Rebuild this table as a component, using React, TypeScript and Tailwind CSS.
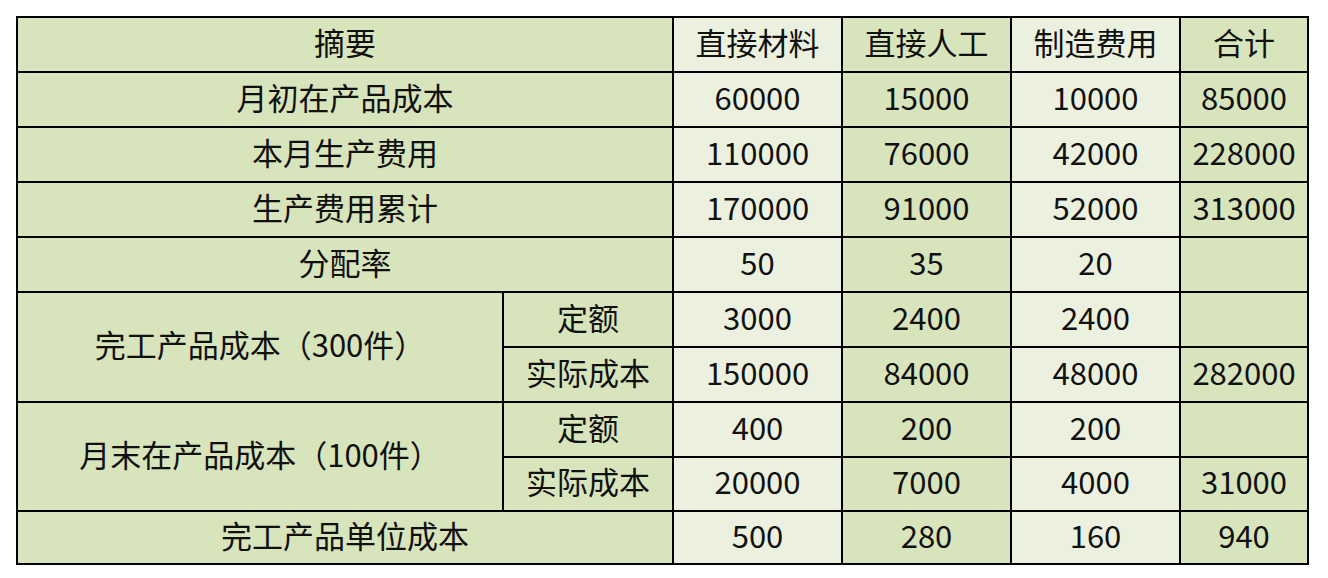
import React from 'react';

const DARK = 'bg-[#d8e4bc]';
const LIGHT = 'bg-[#ebf1de]';

type Row = { label?: string; sub?: string; vals: string[]; h: string };

// values: 直接材料, 直接人工, 制造费用, 合计
const cols = [LIGHT, DARK, LIGHT, DARK];

const cell = 'border-2 border-black text-center align-middle p-0 pb-[7px] leading-none';

export default function App() {
    const simple: Row[] = [
        { label: '月初在产品成本', vals: ['60000', '15000', '10000', '85000'], h: 'h-[55px]' },
        { label: '本月生产费用', vals: ['110000', '76000', '42000', '228000'], h: 'h-[55px]' },
        { label: '生产费用累计', vals: ['170000', '91000', '52000', '313000'], h: 'h-[55px]' },
        { label: '分配率', vals: ['50', '35', '20', ''], h: 'h-[55px]' },
    ];

    const groups = [
        {
            label: '完工产品成本（300件）',
            rows: [
                { sub: '定额', vals: ['3000', '2400', '2400', ''], h: 'h-[55px]' },
                { sub: '实际成本', vals: ['150000', '84000', '48000', '282000'], h: 'h-[55px]' },
            ],
        },
        {
            label: '月末在产品成本（100件）',
            rows: [
                { sub: '定额', vals: ['400', '200', '200', ''], h: 'h-[55px]' },
                { sub: '实际成本', vals: ['20000', '7000', '4000', '31000'], h: 'h-[54px]' },
            ],
        },
    ];

    const vals = (v: string[]) =>
        v.map((x, i) => (
            <td key={i} className={`${cell} ${cols[i]}`}>{x}</td>
        ));

    return (
        <div className="w-[1328px] h-[578px] bg-white pt-[16px] pl-[16px]">
            <table
                className="border-collapse table-fixed w-[1291px] text-[31px] text-[#111]"
                style={{ fontFamily: '"Noto Sans CJK SC", "Noto Sans", sans-serif' }}
            >
                <colgroup>
                    <col className="w-[486px]" />
                    <col className="w-[170px]" />
                    <col className="w-[169px]" />
                    <col className="w-[169px]" />
                    <col className="w-[169px]" />
                    <col className="w-[128px]" />
                </colgroup>
                <tbody>
                    <tr className="h-[55px]">
                        <td colSpan={2} className={`${cell} ${DARK}`}>摘要</td>
                        <td className={`${cell} ${LIGHT}`}>直接材料</td>
                        <td className={`${cell} ${DARK}`}>直接人工</td>
                        <td className={`${cell} ${LIGHT}`}>制造费用</td>
                        <td className={`${cell} ${DARK}`}>合计</td>
                    </tr>
                    {simple.map((r) => (
                        <tr key={r.label} className={r.h}>
                            <td colSpan={2} className={`${cell} ${DARK}`}>{r.label}</td>
                            {vals(r.vals)}
                        </tr>
                    ))}
                    {groups.map((g) =>
                        g.rows.map((r, i) => (
                            <tr key={g.label + i} className={r.h}>
                                {i === 0 && (
                                    <td rowSpan={2} className={`${cell} ${DARK}`}>{g.label}</td>
                                )}
                                <td className={`${cell} ${DARK}`}>{r.sub}</td>
                                {vals(r.vals)}
                            </tr>
                        ))
                    )}
                    <tr className="h-[53px]">
                        <td colSpan={2} className={`${cell} ${DARK}`}>完工产品单位成本</td>
                        {vals(['500', '280', '160', '940'])}
                    </tr>
                </tbody>
            </table>
        </div>
    );
}
